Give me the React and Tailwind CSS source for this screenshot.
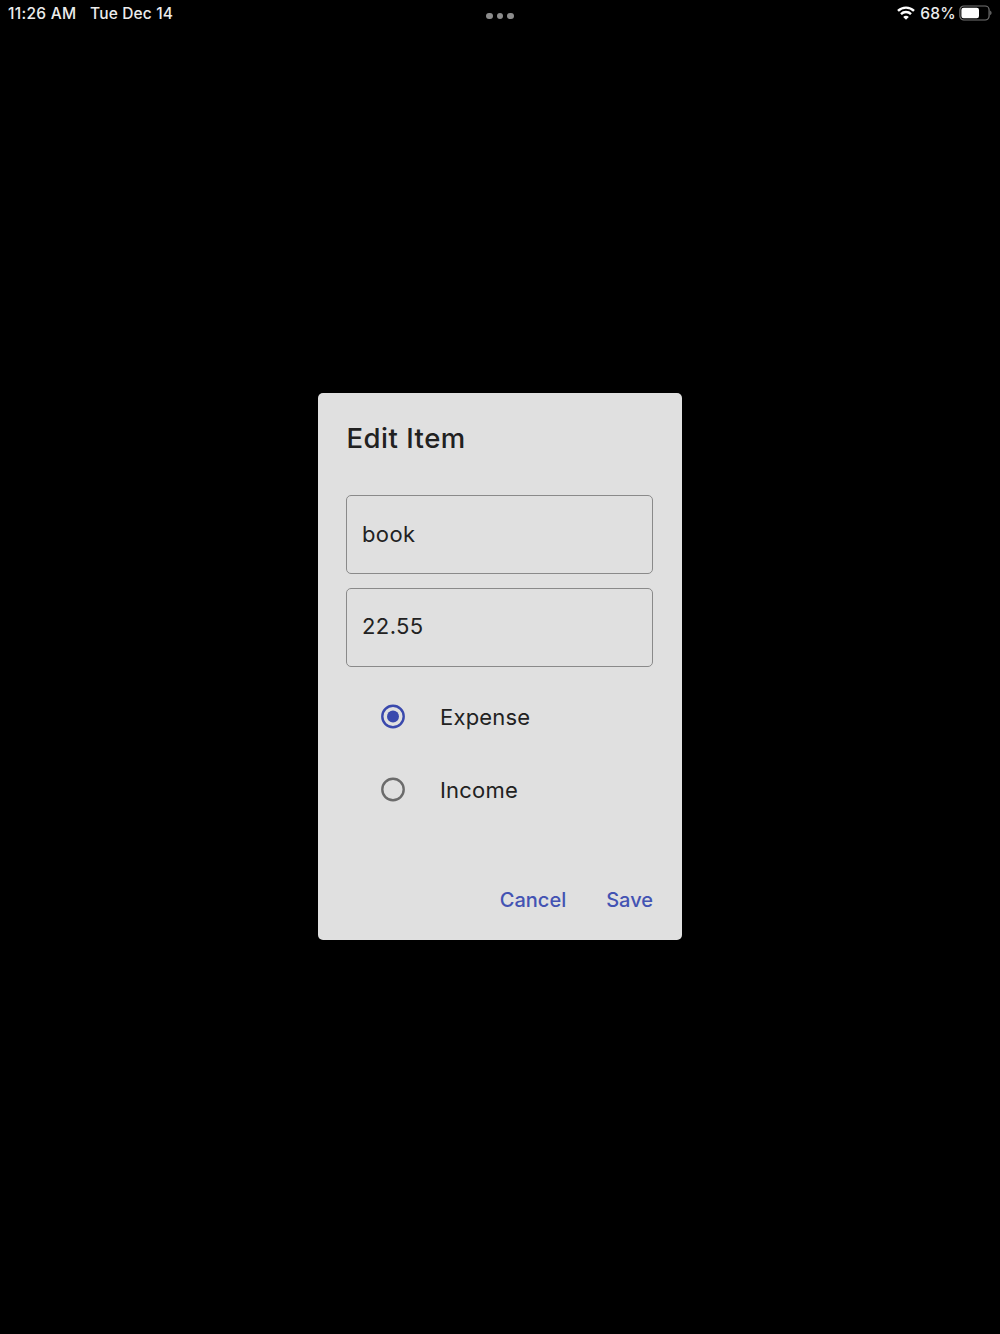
import { useState } from 'react';

const StatusBar = () => {
  return (
    <header className="flex h-[30px] justify-between px-2 text-[15.5px] leading-[27px] font-[450] text-[#ececec]">
      <div className="flex w-[400px] gap-[13.5px]">
        <span className="tracking-[0.3px]">11:26 AM</span>
        <span className="tracking-[0.15px]">Tue Dec 14</span>
      </div>

      {/* Multitasking dots */}
      <div className="flex items-center gap-[3.6px] pt-[2px]">
        <span className="size-[6.8px] rounded-full bg-[#8c8c8c]"></span>
        <span className="size-[6.8px] rounded-full bg-[#8c8c8c]"></span>
        <span className="size-[6.8px] rounded-full bg-[#8c8c8c]"></span>
      </div>

      <div className="flex w-[400px] justify-end">
        <WifiIcon />
        <span className="mr-[3px] ml-[5px] tracking-[0.3px]">68%</span>
        <BatteryIcon />
      </div>
    </header>
  );
};

const WifiIcon = () => (
  <svg className="mt-[6px] h-[14px] w-[18px]" viewBox="0 0 18 14" fill="none" stroke="#fff" strokeWidth="2.4">
    <path d="M1 4.9a11.3 11.3 0 0 1 16 0" />
    <path d="M4 8.1a7 7 0 0 1 10 0" />
    <path d="M9 13.8 6.2 11a3.9 3.9 0 0 1 5.6 0Z" fill="#fff" stroke="none" />
  </svg>
);

const BatteryIcon = () => (
  <svg className="mt-[5px] h-4 w-[33px]" viewBox="0 0 33 16" fill="none">
    <rect x="0.9" y="1" width="29.2" height="14" rx="4" stroke="#747474" strokeWidth="1.2" />
    <rect x="2.4" y="2.8" width="17.6" height="10.4" rx="2.2" fill="#fff" />
    <path d="M31.2 5.5c1.8.8 1.8 4 0 4.8Z" fill="#747474" />
  </svg>
);

const TextField = ({ label, value, onChange }) => (
  <input
    aria-label={label}
    value={value}
    onChange={(e) => onChange(e.target.value)}
    className="h-[79px] w-[307px] rounded-[5px] border border-[#8a8a8a] bg-transparent px-[15px] pb-[2px] text-[22px] tracking-[0.4px] text-[#222] outline-none"
  />
);

const RadioOption = ({ label, checked, onSelect }) => (
  <button
    role="radio"
    aria-checked={checked}
    onClick={onSelect}
    className="flex h-[73px] items-center gap-[35px] pl-[35px] text-left"
  >
    <svg className="size-6 overflow-visible" viewBox="0 0 24 24" fill="none">
      <circle cx="12" cy="11.5" r="10.7" stroke={checked ? '#3a49ad' : '#6b6b6b'} strokeWidth="2.4" />
      {checked && <circle cx="12" cy="11.5" r="6" fill="#3a49ad" />}
    </svg>
    <span className="pt-px text-[22px] tracking-[0.2px] text-[#222]">{label}</span>
  </button>
);

const App = () => {
  const [name, setName] = useState('book');
  const [amount, setAmount] = useState('22.55');
  const [type, setType] = useState('Expense');

  return (
    <div className="flex h-[1334px] w-[1000px] flex-col overflow-hidden bg-black font-['Inter',sans-serif]">
      <StatusBar />

      <main className="flex flex-1 justify-center pt-[363px]">
        <div role="dialog" className="flex h-[547px] w-[364px] flex-col rounded-[5px] bg-[#e0e0e0] px-[28px]">
          <h2 className="mt-[28px] ml-[0.5px] text-[27.5px] leading-[34px] font-[450] tracking-[0.5px] text-[#212121]">Edit Item</h2>

          <div className="mt-[40px] flex flex-col gap-[13.5px]">
            <TextField label="Name" value={name} onChange={setName} />
            <TextField label="Amount" value={amount} onChange={setAmount} />
          </div>

          <div role="radiogroup" className="mt-[13.5px] flex flex-col">
            {['Expense', 'Income'].map((option) => (
              <RadioOption
                key={option}
                label={option}
                checked={type === option}
                onSelect={() => setType(option)}
              />
            ))}
          </div>

          {/* Actions */}
          <div className="mt-auto mr-[1px] mb-[25px] flex justify-end gap-[40px] text-[20px] leading-[30px] font-[460] text-[#4353b3]">
            <button>Cancel</button>
            <button>Save</button>
          </div>
        </div>
      </main>
    </div>
  );
};

export default App;
